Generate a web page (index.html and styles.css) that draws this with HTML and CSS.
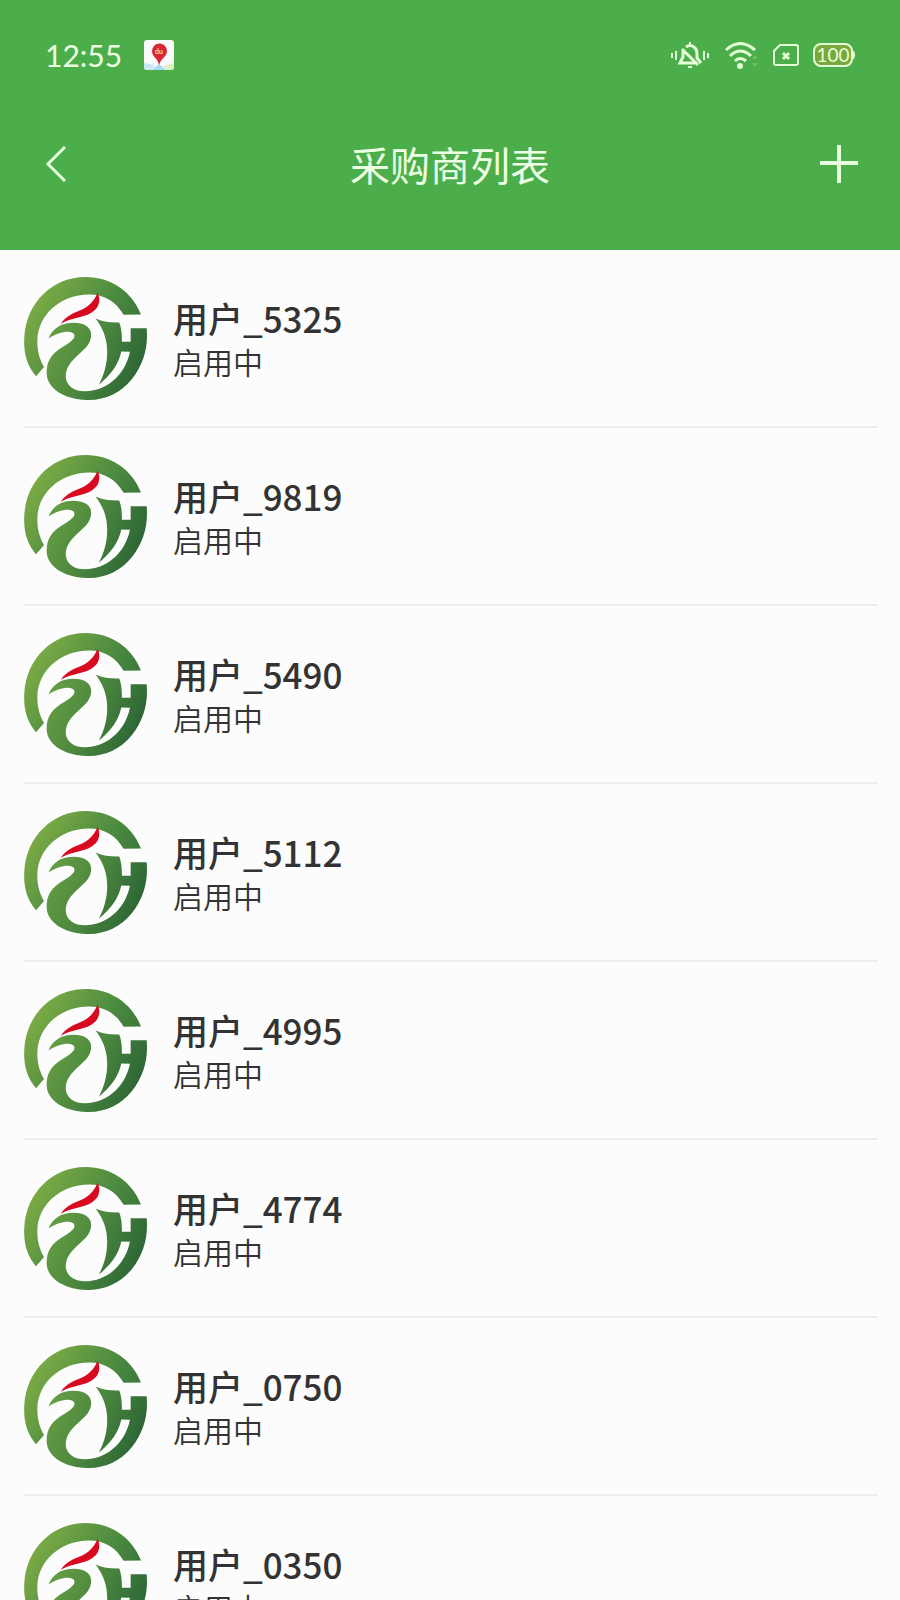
FILE: index.html
```html
<!DOCTYPE html>
<html lang="zh-CN">
<head>
  <meta charset="UTF-8">
  <meta name="viewport" content="width=device-width, initial-scale=1.0">
  <title>采购商列表</title>
  <link rel="stylesheet" href="styles.css">
</head>
<body>
  <!-- shared logo -->
  <svg class="symbols" width="0" height="0" aria-hidden="true">
    <defs>
      <linearGradient id="leaf" gradientUnits="userSpaceOnUse" x1="70" y1="120" x2="400" y2="330">
        <stop offset="0" stop-color="#7cab45"/>
        <stop offset="0.5" stop-color="#4c8b40"/>
        <stop offset="1" stop-color="#2c6636"/>
      </linearGradient>
      <linearGradient id="swan" gradientUnits="userSpaceOnUse" x1="110" y1="230" x2="380" y2="350">
        <stop offset="0" stop-color="#689f43"/>
        <stop offset="0.5" stop-color="#4b873e"/>
        <stop offset="1" stop-color="#2d6636"/>
      </linearGradient>
    </defs>
    <symbol id="logo" viewBox="42 51 368 368">
      <path fill="url(#leaf)" d="M78 348C50 316 40 277 43 230C49 128 127 51 226 51C302 51 364 93 392 163L340 164C317 124 283 103 237 103C151 103 84 164 82 239C81 270 88 297 102 320Z"/>
      <path fill="#d9091f" d="M152 191C163 173 182 162 207 152C237 140 252 122 262 98C271 114 268 134 257 147C232 175 192 168 152 191Z"/>
      <path fill="url(#swan)" d="M115 235C130 202 155 188 190 188C223 188 243 202 243 224C243 247 229 263 207 281C181 304 166 324 167 350C169 377 192 393 225 393C282 393 343 352 359 275L333 274C326 310 304 342 266 373C286 335 295 294 289 250C284 219 273 198 256 175C279 185 305 188 327 187C333 203 335 219 335 245L361 245L361 204L409 204C414 260 400 312 365 356C329 400 282 420 230 419C158 417 112 382 110 342C108 306 123 284 149 266C177 249 194 238 193 226C190 207 146 214 115 235Z"/>
    </symbol>
  </svg>

  <header class="header">
    <div class="status-bar">
      <span class="time">12:55</span>
      <svg class="map-icon" viewBox="0 0 30 30" aria-hidden="true">
        <rect width="30" height="30" rx="3" fill="#fafafa"/>
        <path d="M0 23L11 25L8 30H3Q0 30 0 27Z" fill="#c9e9f5"/>
        <path d="M15 24L22 30H8Z" fill="#a7d9f2"/>
        <path d="M19 26L30 23V27Q30 30 27 30H22Z" fill="#dceec4"/>
        <path d="M15 25C14 18 8 17 8 11A7 7 0 0 1 23 11C23 17 17 18 15 25Z" fill="#d72732"/>
        <text class="map-text" x="15" y="14" text-anchor="middle">du</text>
      </svg>
      <div class="status-icons">
        <svg width="40" height="28" viewBox="0 0 40 28" fill="none" stroke="#e4ffd8" stroke-width="2" aria-hidden="true">
          <path d="M1 12v5M5 10v9M33 10v9M37 12v5"/>
          <path d="M15 6Q19 3 23 6Q26 8 26 13V17L30 22M12 10V16L9 22H24M11 8L27 24" stroke-width="3"/>
          <path d="M19 1v4M17 26h4"/>
        </svg>
        <svg width="34" height="28" viewBox="0 0 34 28" fill="none" stroke="#e4ffd8" stroke-width="3" aria-hidden="true">
          <path d="M1 9Q15 -4 30 9M5 15Q15 5 26 15M10 20Q15 15 21 20"/>
          <circle cx="15" cy="25" r="3" fill="#e4ffd8" stroke="none"/>
          <path d="M27 18l3-4 3 4zM27 22l3 4 3-4z" fill="#72bc66" stroke="none"/>
        </svg>
        <svg width="26" height="28" viewBox="0 0 26 28" fill="none" stroke="#e4ffd8" stroke-width="2" aria-hidden="true">
          <path d="M7 4H23Q25 4 25 6V22Q25 24 23 24H3Q1 24 1 22V10Z"/>
          <path d="M10 12l6 6M16 12l-6 6" stroke-width="3"/>
        </svg>
        <svg width="42" height="28" viewBox="0 0 42 28" aria-hidden="true">
          <rect x="1" y="3" width="38" height="22" rx="7" fill="#7ba83c" stroke="#e4ffd8" stroke-width="2"/>
          <path d="M39 9Q42 10 42 14T39 19Z" fill="#e4ffd8"/>
          <text class="battery-text" x="20" y="21" text-anchor="middle">100</text>
        </svg>
      </div>
    </div>
    <div class="nav-bar">
      <button class="nav-btn" type="button" aria-label="返回">
        <svg width="26" height="36" viewBox="0 0 26 36" fill="none" stroke="#e8ffdf" stroke-width="3">
          <path d="M23 1L6 18L23 35"/>
        </svg>
      </button>
      <h1 class="title">采购商列表</h1>
      <button class="nav-btn nav-add" type="button" aria-label="添加">
        <svg width="38" height="38" viewBox="0 0 38 38" fill="none" stroke="#e8ffdf" stroke-width="4">
          <path d="M0 18H38M19 0V38"/>
        </svg>
      </button>
    </div>
  </header>

  <ul class="list">
    <li class="user">
      <svg class="avatar" aria-hidden="true"><use href="#logo"/></svg>
      <div class="info">
        <p class="name">用户_5325</p>
        <p class="state">启用中</p>
      </div>
    </li>
    <li class="user">
      <svg class="avatar" aria-hidden="true"><use href="#logo"/></svg>
      <div class="info">
        <p class="name">用户_9819</p>
        <p class="state">启用中</p>
      </div>
    </li>
    <li class="user">
      <svg class="avatar" aria-hidden="true"><use href="#logo"/></svg>
      <div class="info">
        <p class="name">用户_5490</p>
        <p class="state">启用中</p>
      </div>
    </li>
    <li class="user">
      <svg class="avatar" aria-hidden="true"><use href="#logo"/></svg>
      <div class="info">
        <p class="name">用户_5112</p>
        <p class="state">启用中</p>
      </div>
    </li>
    <li class="user">
      <svg class="avatar" aria-hidden="true"><use href="#logo"/></svg>
      <div class="info">
        <p class="name">用户_4995</p>
        <p class="state">启用中</p>
      </div>
    </li>
    <li class="user">
      <svg class="avatar" aria-hidden="true"><use href="#logo"/></svg>
      <div class="info">
        <p class="name">用户_4774</p>
        <p class="state">启用中</p>
      </div>
    </li>
    <li class="user">
      <svg class="avatar" aria-hidden="true"><use href="#logo"/></svg>
      <div class="info">
        <p class="name">用户_0750</p>
        <p class="state">启用中</p>
      </div>
    </li>
    <li class="user">
      <svg class="avatar" aria-hidden="true"><use href="#logo"/></svg>
      <div class="info">
        <p class="name">用户_0350</p>
        <p class="state">启用中</p>
      </div>
    </li>
  </ul>
</body>
</html>
```

FILE: styles.css
```css
* {
  box-sizing: border-box;
}
body {
  display: flex;
  flex-direction: column;
  height: 100vh;
  margin: 0;
  font-family: "Noto Sans CJK SC", sans-serif;
  background: #fcfcfc;
  color: #333;
}
.symbols {
  position: absolute;
}
.header {
  flex: none;
  padding: 32px 42px 46px;
  background: #4cae4a;
  color: #ecffe5;
}
.status-bar {
  display: flex;
  align-items: center;
  height: 46px;
  padding: 0 3px;
}
.time {
  font-family: Lato, sans-serif;
  font-size: 30px;
  line-height: 46px;
}
.map-icon {
  width: 30px;
  height: 30px;
  margin-left: 22px;
}
.map-text {
  font-family: Lato, sans-serif;
  font-size: 7px;
  fill: #fff;
}
.status-icons {
  display: flex;
  align-items: center;
  gap: 14px;
  margin-left: auto;
}
.battery-text {
  font-family: Lato, sans-serif;
  font-size: 19px;
  fill: #e4ffd8;
}
.nav-bar {
  display: flex;
  align-items: center;
  justify-content: space-between;
  height: 80px;
  margin-top: 46px;
}
.nav-btn {
  display: flex;
  align-items: center;
  width: 40px;
  height: 40px;
  padding: 0;
  border: none;
  background: none;
  cursor: pointer;
}
.nav-add {
  justify-content: flex-end;
}
.title {
  margin: 0;
  font-size: 40px;
  font-weight: 400;
  line-height: 60px;
}
.list {
  flex: 1;
  min-height: 0;
  margin: 0;
  padding: 0 22px 0 24px;
  list-style: none;
  overflow-y: auto;
  scrollbar-width: none;
}
.user {
  display: flex;
  align-items: center;
  gap: 26px;
  height: 178px;
  border-bottom: 2px solid #eee;
}
.avatar {
  flex: none;
  width: 123px;
  height: 123px;
}
.info {
  padding-top: 2px;
}
.name,
.state {
  margin: 0;
}
.name {
  font-size: 35px;
  font-weight: 500;
  line-height: 44px;
}
.state {
  font-size: 30px;
  font-weight: 350;
  line-height: 42px;
}
```
